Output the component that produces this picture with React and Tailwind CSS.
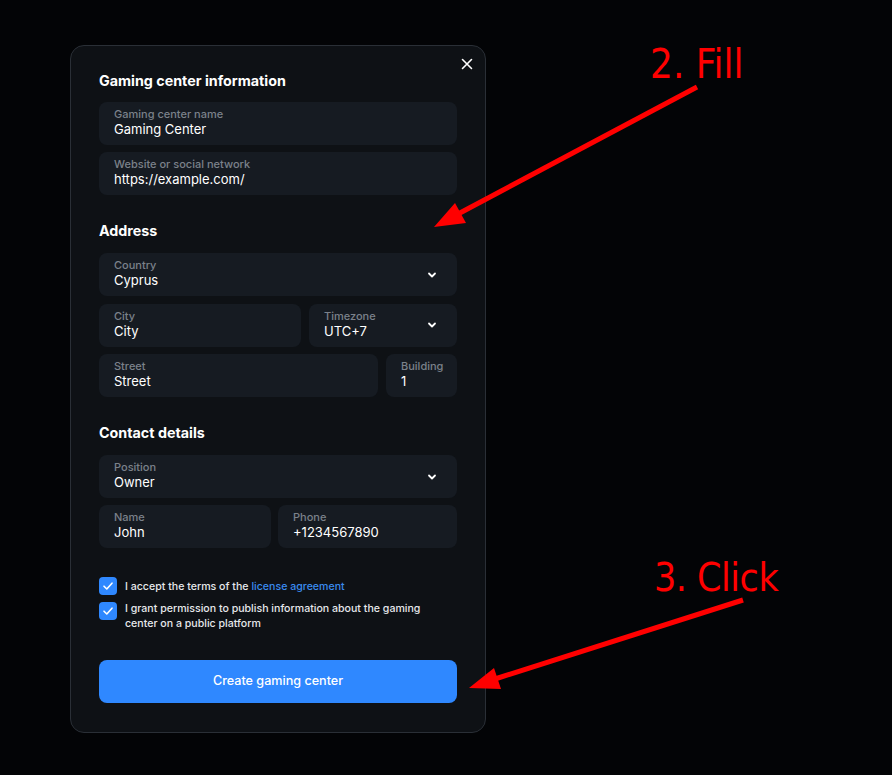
import React from 'react';

const Field = ({ label, value, select, className = '' }) => (
  <div className={`h-[43px] rounded-lg bg-[#161b22] px-[15px] pb-[2px] flex items-center justify-between ${className}`}>
    <div className="flex flex-col min-w-0">
      <span className="text-[11px] leading-[14px] text-[#7b818a] font-medium">{label}</span>
      <span className="text-[13px] leading-[17px] text-white">{value}</span>
    </div>
    {select && (
      <svg width="10" height="10" viewBox="0 0 10 10" className="mr-[5px] mt-[2px] shrink-0">
        <path d="M2 3.5 L5 6.5 L8 3.5" fill="none" stroke="white" strokeWidth="1.8" strokeLinecap="round" strokeLinejoin="round" />
      </svg>
    )}
  </div>
);

const Check = () => (
  <div className="w-[18px] h-[18px] rounded-[4px] bg-[#2f88ff] flex items-center justify-center shrink-0">
    <svg width="12" height="12" viewBox="0 0 12 12">
      <path d="M2 6.2 L4.8 9 L10 3.2" fill="none" stroke="white" strokeWidth="1.6" strokeLinecap="round" strokeLinejoin="round" />
    </svg>
  </div>
);

const Heading = ({ children, className = '' }) => (
  <h2 className={`text-[14.3px] leading-[20px] font-bold text-white ${className}`}>{children}</h2>
);

export default function App() {
  return (
    <div className="relative min-h-[775px] bg-[#030406] pt-[45px] pl-[70px]" style={{ fontFamily: 'Inter, "Noto Sans", sans-serif' }}>
      <div className="relative w-[416px] rounded-[14px] border border-[#2a2f36] bg-[#0e1115] px-[28px] pt-[25px] pb-[29px]">
        <button className="absolute top-[11px] right-[11px] w-[14px] h-[14px] flex items-center justify-center">
          <svg width="12" height="12" viewBox="0 0 12 12">
            <path d="M1.5 1.5 L10.5 10.5 M10.5 1.5 L1.5 10.5" stroke="white" strokeWidth="1.6" strokeLinecap="round" />
          </svg>
        </button>

        <Heading>Gaming center information</Heading>
        <div className="mt-[11px] flex flex-col gap-[7px]">
          <Field label="Gaming center name" value="Gaming Center" />
          <Field label="Website or social network" value="https://example.com/" />
        </div>

        <Heading className="mt-[26px]">Address</Heading>
        <div className="mt-[12px] flex flex-col gap-[7.5px]">
          <Field label="Country" value="Cyprus" select />
          <div className="flex gap-[8px]">
            <Field label="City" value="City" className="flex-1" />
            <Field label="Timezone" value="UTC+7" select className="w-[148px]" />
          </div>
          <div className="flex gap-[8px]">
            <Field label="Street" value="Street" className="flex-1" />
            <Field label="Building" value="1" className="w-[71px]" />
          </div>
        </div>

        <Heading className="mt-[26px]">Contact details</Heading>
        <div className="mt-[12px] flex flex-col gap-[7px]">
          <Field label="Position" value="Owner" select />
          <div className="flex gap-[7px]">
            <Field label="Name" value="John" className="flex-1" />
            <Field label="Phone" value="+1234567890" className="w-[179px]" />
          </div>
        </div>

        <div className="mt-[29px] flex flex-col gap-[7px] text-[10.6px] leading-[15px] text-[#e6e8eb] font-medium">
          <label className="flex items-center gap-[8px]">
            <Check />
            <span>
              I accept the terms of the <a className="text-[#3a8bef]">license agreement</a>
            </span>
          </label>
          <label className="flex items-start gap-[8px]">
            <Check />
            <span className="-mt-[1px] max-w-[305px]">I grant permission to publish information about the gaming center on a public platform</span>
          </label>
        </div>

        <button className="mt-[29px] w-full h-[43px] rounded-lg bg-[#2f88ff] text-white text-[12.6px] font-medium">
          Create gaming center
        </button>
      </div>

      <div className="absolute left-[650px] top-[40px] text-[40px] leading-[48px] text-[#ff0000]" style={{ fontFamily: '"DejaVu Sans Condensed", "DejaVu Sans", sans-serif' }}>
        2. Fill
      </div>
      <div className="absolute left-[654px] top-[554px] text-[39px] leading-[48px] text-[#ff0000] tracking-[-0.5px]" style={{ fontFamily: '"DejaVu Sans Condensed", "DejaVu Sans", sans-serif' }}>
        3. Click
      </div>
      <svg className="absolute inset-0 pointer-events-none" width="892" height="775">
        <line x1="697" y1="87" x2="458" y2="214" stroke="#ff0000" strokeWidth="5" />
        <polygon points="434,227 466,223 455,203" fill="#ff0000" />
        <line x1="743" y1="600" x2="495" y2="679" stroke="#ff0000" strokeWidth="5" />
        <polygon points="469,688 501,689 494,668" fill="#ff0000" />
      </svg>
    </div>
  );
}
